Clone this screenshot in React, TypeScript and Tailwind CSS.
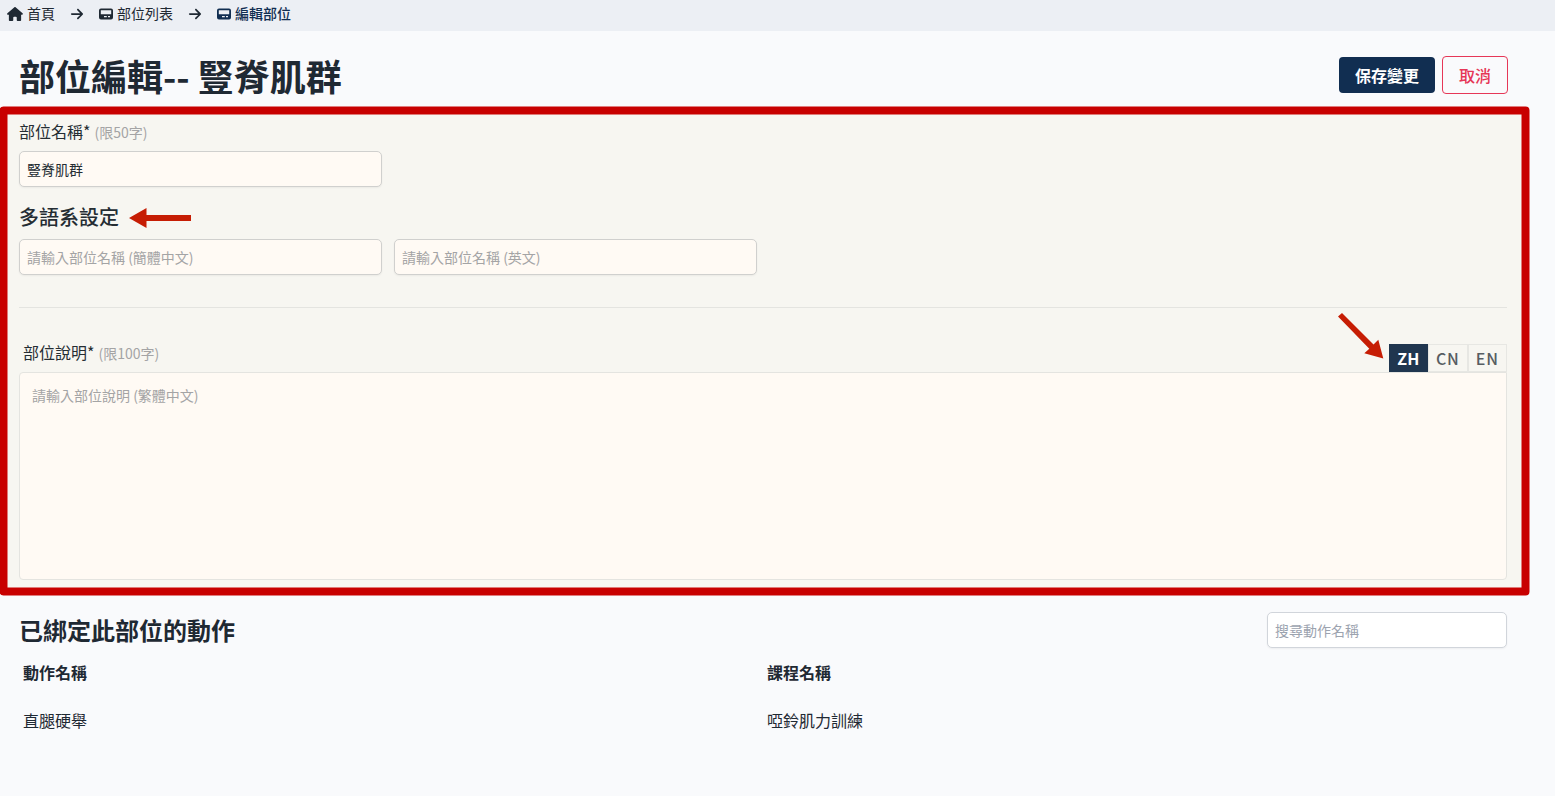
import { useState } from 'react';
import { FaArrowRight, FaHouse } from 'react-icons/fa6';

type Lang = 'ZH' | 'CN' | 'EN';

const LANGS: Lang[] = ['ZH', 'CN', 'EN'];

const PLACEHOLDERS: Record<Lang, string> = {
  ZH: '請輸入部位說明 (繁體中文)',
  CN: '請輸入部位說明 (簡體中文)',
  EN: '請輸入部位說明 (英文)',
};

const actions = [{ id: 1, name: '直腿硬舉', course: '啞鈴肌力訓練' }];

const inputClass =
  'block h-9 rounded-[5px] border px-[7px] text-sm shadow-xs focus:outline-none';

function PartIcon() {
  return (
    <svg viewBox="0 0 14 12" className="mt-0.5 h-3 w-3.5" fill="currentColor">
      <path
        fillRule="evenodd"
        d="M2 .5h10a2 2 0 0 1 2 2v7a2 2 0 0 1-2 2H2a2 2 0 0 1-2-2v-7a2 2 0 0 1 2-2Zm-.2 1.8v3.9h10.4V2.3H1.8ZM5 8v1.2h2.8V8H5Zm4 0v1.2h2V8H9Z"
      />
    </svg>
  );
}

export default function App() {
  const [name, setName] = useState('豎脊肌群');
  const [nameCn, setNameCn] = useState('');
  const [nameEn, setNameEn] = useState('');
  const [lang, setLang] = useState<Lang>('ZH');
  const [descriptions, setDescriptions] = useState<Record<Lang, string>>({ ZH: '', CN: '', EN: '' });
  const [keyword, setKeyword] = useState('');

  const rows = actions.filter((a) => a.name.includes(keyword));

  return (
    <div className="h-[796px] overflow-hidden bg-[#f9fafc] font-['Noto_Sans_CJK_TC',sans-serif] text-[#1f2933]">
      <nav className="flex h-[31px] items-center bg-[#eceff4] pb-[5px] pl-[7px] text-sm">
        <a className="flex items-center gap-1">
          <FaHouse className="mt-0.5 h-3.5 w-4" />
          首頁
        </a>
        <FaArrowRight className="mx-[15px] mt-0.5 size-3.5" />
        <a className="flex items-center gap-1">
          <PartIcon />
          部位列表
        </a>
        <FaArrowRight className="mx-[15px] mt-0.5 size-3.5" />
        <span className="flex items-center gap-1 font-medium text-[#112e51]">
          <PartIcon />
          編輯部位
        </span>
      </nav>

      <header className="flex h-[76px] items-center justify-between pr-[47px] pl-[19px]">
        <h1 className="pt-3 text-4xl font-bold">部位編輯-- 豎脊肌群</h1>
        <div className="flex items-center gap-[7px] pt-3">
          <button type="button" className="h-9 w-24 rounded-[4px] bg-[#112e51] font-bold text-white">
            保存變更
          </button>
          <button
            type="button"
            className="h-[38px] w-[66px] rounded-[4px] border border-[#e63757] font-medium text-[#e63757]"
          >
            取消
          </button>
        </div>
      </header>

      <section className="relative mb-px h-[488px] w-[1529px] bg-[#f7f6f1] pt-2 pr-[22px] pl-[19px] text-[#252d33]">
        <svg className="pointer-events-none absolute inset-0 size-full overflow-visible">
          <rect
            x="3.5"
            y="3.5"
            width="1522"
            height="481"
            fill="none"
            stroke="#c80000"
            strokeWidth="8"
            strokeLinejoin="round"
          />
        </svg>

        <label className="block pt-1">
          部位名稱* <span className="ml-[0.5px] text-sm text-[#a4a4a5]">(限50字)</span>
        </label>
        <input
          value={name}
          onChange={(e) => setName(e.target.value)}
          className={`${inputClass} mt-2 w-[363px] border-[#d0d0ce] bg-[#fffaf4]`}
        />

        <div className="mt-[15px] flex h-[30px] items-center gap-2.5">
          <h2 className="text-xl font-medium">多語系設定</h2>
          <svg viewBox="0 0 62 20" className="mt-px h-5 w-[62px]" fill="#c61d04">
            <path d="M0 10 17.5 0v7H62v6H17.5v7Z" />
          </svg>
        </div>
        <div className="mt-[7px] flex gap-3">
          <input
            value={nameCn}
            onChange={(e) => setNameCn(e.target.value)}
            placeholder="請輸入部位名稱 (簡體中文)"
            className={`${inputClass} w-[363px] border-[#d0d0ce] bg-[#fffaf4] placeholder:text-[#a4a4a5]`}
          />
          <input
            value={nameEn}
            onChange={(e) => setNameEn(e.target.value)}
            placeholder="請輸入部位名稱 (英文)"
            className={`${inputClass} w-[363px] border-[#d0d0ce] bg-[#fffaf4] placeholder:text-[#a4a4a5]`}
          />
        </div>

        <hr className="mt-8 border-[#e4e4e0]" />

        <div className="flex h-16 items-end justify-between">
          <label className="mb-2 pl-1">
            部位說明* <span className="ml-[0.5px] text-sm text-[#a4a4a5]">(限100字)</span>
          </label>
          <div className="flex items-end">
            <svg viewBox="0 0 46 46" className="mr-[5px] mb-[13px] size-[46px]" fill="#c61d04">
              <path d="M0 3.5 4 0l31.5 31.5 4.8-4.8 5 18.8-19-5.2 5-4.5Z" />
            </svg>
            {LANGS.map((l) => (
              <button
                key={l}
                type="button"
                onClick={() => setLang(l)}
                className={
                  l === lang
                    ? 'h-7 w-[39px] bg-[#20364f] font-bold tracking-wide text-white'
                    : 'h-7 w-[39.5px] border border-[#e7e7e3] font-medium tracking-wider text-[#575d62]'
                }
              >
                {l}
              </button>
            ))}
          </div>
        </div>
        <textarea
          value={descriptions[lang]}
          onChange={(e) => setDescriptions({ ...descriptions, [lang]: e.target.value })}
          placeholder={PLACEHOLDERS[lang]}
          className="block h-52 w-full resize-none rounded-[4px] rounded-tr-none border border-[#e4e4e0] bg-[#fffaf4] px-3 py-3 text-sm placeholder:text-[#a4a4a5] focus:outline-none"
        />
      </section>

      <section className="pr-12 pl-[19px]">
        <div className="flex items-center justify-between pt-4">
          <h2 className="text-2xl font-bold">已綁定此部位的動作</h2>
          <input
            value={keyword}
            onChange={(e) => setKeyword(e.target.value)}
            placeholder="搜尋動作名稱"
            className={`${inputClass} w-60 border-[#d1d5db] bg-white placeholder:text-[#9ca3af]`}
          />
        </div>
        <table className="w-full table-fixed text-left">
          <thead>
            <tr className="h-12">
              <th className="px-1 font-bold">動作名稱</th>
              <th className="px-1 font-bold">課程名稱</th>
            </tr>
          </thead>
          <tbody>
            {rows.map((a) => (
              <tr key={a.id} className="h-12">
                <td className="px-1">{a.name}</td>
                <td className="px-1">{a.course}</td>
              </tr>
            ))}
          </tbody>
        </table>
      </section>
    </div>
  );
}
